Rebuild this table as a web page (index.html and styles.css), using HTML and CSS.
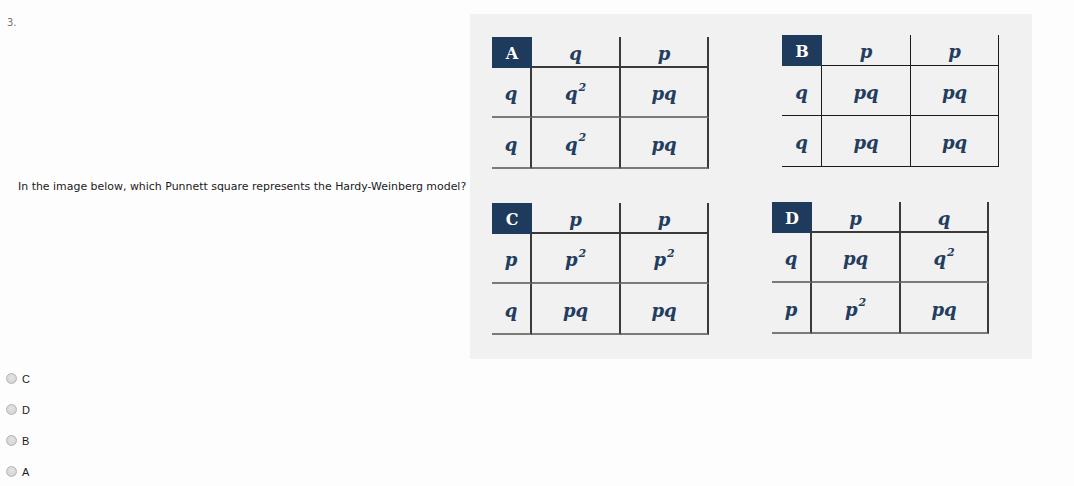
FILE: index.html
```html
<!DOCTYPE html>
<html>
<head>
<meta charset="utf-8">
<link rel="stylesheet" href="styles.css">
</head>
<body>
<div class="question">
  <div class="qnum">3.</div>
  <div class="qtext">In the image below, which Punnett square represents the Hardy-Weinberg model?</div>
  <div class="figure">
    <div class="fig-row row-top">
      <div class="punnett pa">
        <div class="lbl">A</div><div class="hd">q</div><div class="hd">p</div>
        <div class="rh">q</div><div class="c">q<sup>2</sup></div><div class="c">pq</div>
        <div class="rh last">q</div><div class="c last">q<sup>2</sup></div><div class="c last">pq</div>
      </div>
      <div class="punnett pb">
        <div class="lbl">B</div><div class="hd">p</div><div class="hd">p</div>
        <div class="rh">q</div><div class="c">pq</div><div class="c">pq</div>
        <div class="rh last">q</div><div class="c last">pq</div><div class="c last">pq</div>
      </div>
    </div>
    <div class="fig-row row-bottom">
      <div class="punnett pc">
        <div class="lbl">C</div><div class="hd">p</div><div class="hd">p</div>
        <div class="rh">p</div><div class="c">p<sup>2</sup></div><div class="c">p<sup>2</sup></div>
        <div class="rh last">q</div><div class="c last">pq</div><div class="c last">pq</div>
      </div>
      <div class="punnett pd">
        <div class="lbl">D</div><div class="hd">p</div><div class="hd">q</div>
        <div class="rh">q</div><div class="c">pq</div><div class="c">q<sup>2</sup></div>
        <div class="rh last">p</div><div class="c last">p<sup>2</sup></div><div class="c last">pq</div>
      </div>
    </div>
  </div>
</div>
<div class="options">
  <label class="opt"><span class="radio"></span><span class="opt-text">C</span></label>
  <label class="opt"><span class="radio"></span><span class="opt-text">D</span></label>
  <label class="opt"><span class="radio"></span><span class="opt-text">B</span></label>
  <label class="opt"><span class="radio"></span><span class="opt-text">A</span></label>
</div>
</body>
</html>
```

FILE: styles.css
```css
html, body {
  margin: 0;
  padding: 0;
  background: #fdfdfd;
}
body {
  font-family: "DejaVu Sans", Verdana, sans-serif;
  color: #222;
  width: 1074px;
  height: 486px;
  overflow: hidden;
}
.question {
  display: flex;
  margin-top: 14px;
}
.qnum {
  flex: none;
  width: 11px;
  padding-left: 7px;
  font-size: 10px;
  color: #777;
  line-height: 12px;
  padding-top: 3px;
}
.qtext {
  flex: none;
  width: 452px;
  align-self: center;
  font-size: 10.95px;
  color: #1a1a1a;
  line-height: 13px;
  white-space: nowrap;
}
.figure {
  flex: none;
  width: 562px;
  height: 345px;
  background: #f1f1f1;
  box-sizing: border-box;
  padding-left: 22px;
  display: flex;
  flex-direction: column;
}
.fig-row {
  display: flex;
  align-items: flex-start;
}
.row-top {
  height: 167px;
  padding-top: 21px;
  gap: 73px;
}
.row-bottom {
  padding-top: 0;
  gap: 63px;
}
.pa { margin-top: 2px; }
.pc { margin-top: 1px; }

.punnett {
  display: grid;
  grid-template-columns: 40px 89px 88px;
  grid-template-rows: 31px 50px 51px;
  font-family: "DejaVu Serif", "Liberation Serif", serif;
  font-weight: bold;
  font-style: italic;
  font-size: 18px;
  color: #233d5f;
}
.punnett > div {
  display: flex;
  align-items: center;
  justify-content: center;
  box-sizing: border-box;
  padding-top: 3px;
}
.punnett .lbl {
  background: #1e3a5c;
  color: #fff;
  font-style: normal;
  font-size: 16px;
  padding-top: 1px;
}
.punnett .hd {
  border-right: 2px solid #3a3a3a;
  border-bottom: 2px solid #3a3a3a;
}
.punnett .rh {
  border-right: 2px solid #3a3a3a;
  border-bottom: 2px solid #7a7a7a;
}
.punnett .c {
  border-right: 2px solid #3a3a3a;
  border-bottom: 2px solid #7a7a7a;
}
.pb .hd, .pb .rh, .pb .c {
  border-color: #1a1a1a;
  border-right-width: 1px;
  border-bottom-width: 1px;
}
.punnett sup {
  font-size: 11px;
  line-height: 0;
  vertical-align: 0;
  position: relative;
  top: -6px;
  margin-left: 1px;
}

.options {
  padding-top: 4px;
}
.opt {
  display: flex;
  align-items: center;
  height: 31px;
  font-family: "Liberation Sans", Arial, sans-serif;
  font-size: 11px;
  color: #1a1a1a;
}
.radio {
  width: 9px;
  height: 9px;
  border-radius: 50%;
  border: 1px solid #b5b5b5;
  background: radial-gradient(circle at 50% 40%, #e4e4e4, #cfcfcf);
  margin-left: 6px;
  margin-right: 5px;
}
```
